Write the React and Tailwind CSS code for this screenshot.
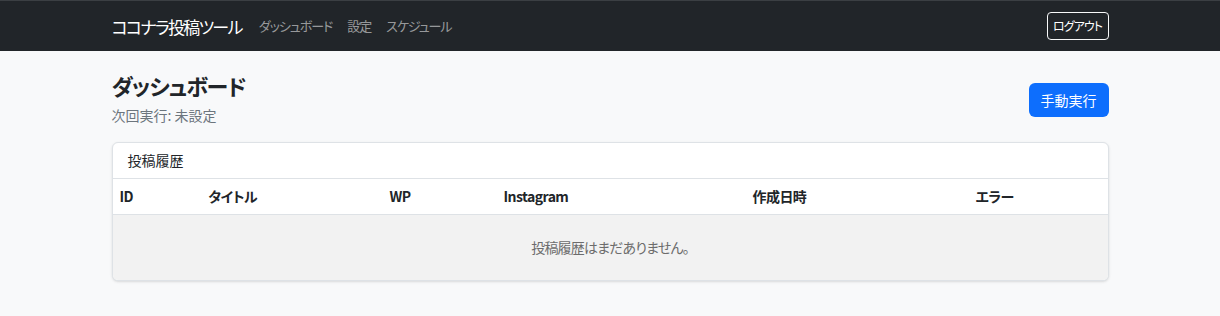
export default function App() {
  const font = "font-['Noto_Sans_CJK_JP','Noto_Sans',sans-serif] [font-feature-settings:'palt']";
  const cols = [
    { label: "ID", w: "w-[89px]" },
    { label: "タイトル", w: "w-[181px]" },
    { label: "WP", w: "w-[114px]" },
    { label: "Instagram", w: "w-[249px]" },
    { label: "作成日時", w: "w-[223px]" },
    { label: "エラー", w: "flex-1" },
  ];
  return (
    <div className={`min-h-[316px] bg-[#f8f9fa] ${font} text-[#212529]`}>
      <nav className="h-[51px] bg-[#212529] border-t border-[#3b3f43]">
        <div className="w-[997px] mx-auto h-full flex items-center">
          <span className="text-white text-[17px] tracking-[-0.1em] mr-[17px] leading-none">ココナラ投稿ツール</span>
          <div className="flex items-center text-[13px] tracking-[-0.08em] text-[#ffffff8c] gap-[15px]">
            <span>ダッシュボード</span>
            <span>設定</span>
            <span>スケジュール</span>
          </div>
          <div className="ml-auto">
            <button className="h-[28px] px-[4px] border border-[#f8f9fa] rounded-[4px] text-white text-[12px] tracking-[-0.08em] leading-none w-[62px] whitespace-nowrap">
              ログアウト
            </button>
          </div>
        </div>
      </nav>
      <main className="w-[997px] mx-auto">
        <div className="flex justify-between items-start pt-[18px]">
          <div>
            <h1 className="text-[22px] tracking-[-0.05em] font-bold leading-[32px]">ダッシュボード</h1>
            <p className="text-[14px] text-[#6c757d] mt-[4px] leading-[20px]">次回実行: 未設定</p>
          </div>
          <button className="mt-[14px] h-[34px] w-[80px] rounded-[6px] bg-[#0d6efd] text-white text-[14px]">
            手動実行
          </button>
        </div>
        <div className="mt-[17px] bg-white border border-[#dee2e6] rounded-[6px] shadow-sm overflow-hidden">
          <div className="h-[36px] px-[15px] flex items-center text-[14px] border-b border-[#dee2e6]">投稿履歴</div>
          <div className="flex h-[36px] items-center text-[14px] tracking-[-0.04em] font-bold border-b border-[#dee2e6]">
            {cols.map((c) => (
              <div key={c.label} className={`${c.w} px-[7px]`}>{c.label}</div>
            ))}
          </div>
          <div className="h-[65px] bg-[#f2f2f2] flex items-center justify-center text-[14px] tracking-[-0.06em] text-[#6c6c6c]">
            投稿履歴はまだありません。
          </div>
        </div>
      </main>
    </div>
  );
}
